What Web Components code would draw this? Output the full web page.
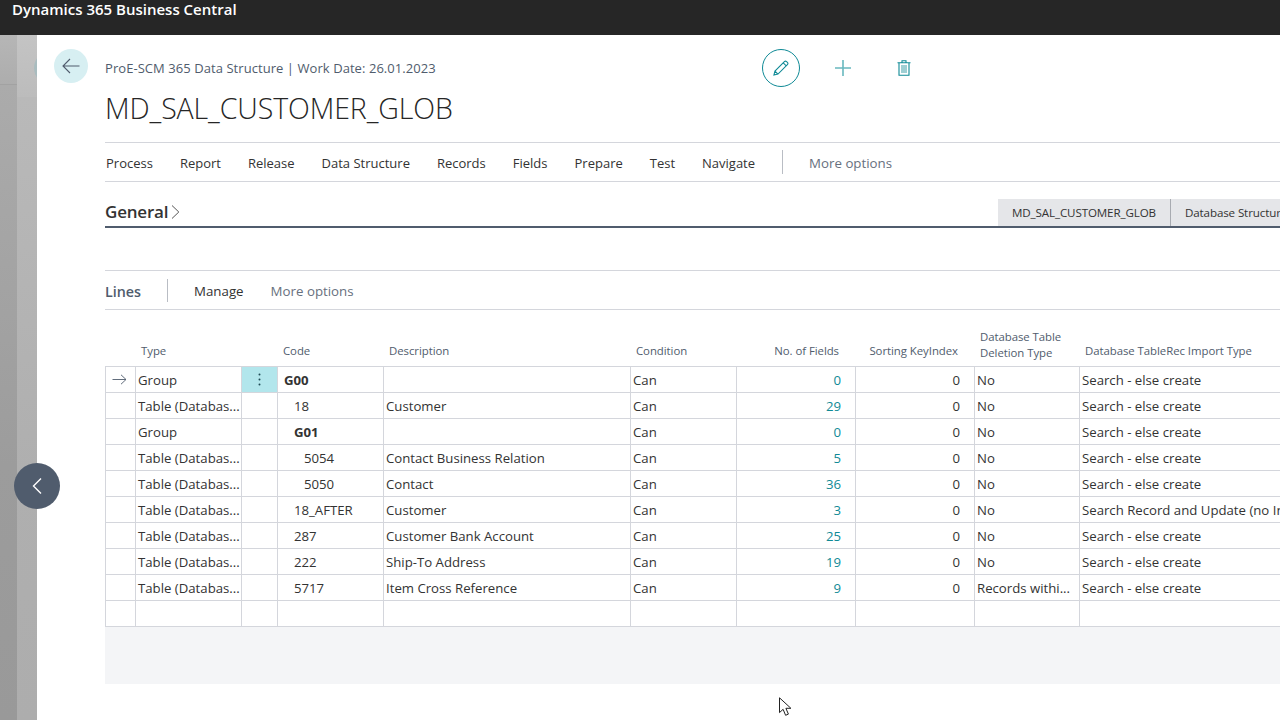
<!DOCTYPE html>
<html><head><meta charset="utf-8"><style>
html,body{margin:0;height:100%;overflow:hidden;background:#fff}
body{font-family:"Open Sans","Noto Sans",sans-serif}
</style></head><body>
<bc-shell>
  <bc-page>
    <bc-title crumb="ProE-SCM 365 Data Structure | Work Date: 26.01.2023" name="MD_SAL_CUSTOMER_GLOB"></bc-title>
    <bc-menu items="Process,Report,Release,Data Structure,Records,Fields,Prepare,Test,Navigate"></bc-menu>
    <bc-general></bc-general>
    <bc-lines></bc-lines>
  </bc-page>
</bc-shell>
<script>
const FONT='"Open Sans","Noto Sans",sans-serif';
function def(name,html,init){customElements.define(name,class extends HTMLElement{connectedCallback(){if(this.shadowRoot)return;const r=this.attachShadow({mode:'open'});r.innerHTML=typeof html==='function'?html(this):html;init&&init(r,this)}})}
def('bc-shell',`<style>
:host{display:flex;flex-direction:column;height:720px;position:relative;font-family:${FONT};overflow:hidden}
.top{height:35px;background:#262626;color:#fff;font-weight:600;font-size:15px;line-height:19px;padding:0 12px;box-sizing:border-box;flex:none}
.body{flex:1;display:flex;min-height:0}
.rail{flex:none;width:37px;display:flex;position:relative;overflow:hidden}
.a{width:17px;display:flex;flex-direction:column}
.a1{height:50px;background:linear-gradient(#b6b6b6,#adadad);border-bottom:1px solid #a2a2a2;box-sizing:border-box}
.a2{flex:1;background:linear-gradient(#ababab,#9c9c9c 60%,#999)}
.b{width:20px;display:flex;flex-direction:column}
.b1{height:62px;background:linear-gradient(#c4c4c4,#bcbcbc)}
.b2{flex:1;background:linear-gradient(#b9b9b9,#afafaf 60%,#adadad)}
.ghost{position:absolute;left:34px;top:16px;width:34px;height:34px;border-radius:50%;background:#a9bcbf}
.main{flex:1;min-width:0;background:#fff}
.back{position:absolute;left:14px;top:463px;width:46px;height:46px;border-radius:50%;background:#505c6d;display:flex;align-items:center;justify-content:center}
.cursor{position:absolute;left:779px;top:697px}
</style>
<div class="top">Dynamics 365 Business Central</div>
<div class="body"><div class="rail"><div class="a"><div class="a1"></div><div class="a2"></div></div><div class="b"><div class="b1"></div><div class="b2"></div></div><div class="ghost"></div></div><div class="main"><slot></slot></div></div>
<div class="back"><svg width="12" height="18" viewBox="0 0 12 18"><path d="M10 1.500 2.500 9l7.500 7.500" fill="none" stroke="#fff" stroke-width="1.400"/></svg></div>
<svg class="cursor" width="14" height="21" viewBox="0 0 14 21"><path d="M.5.800V15.600l3.600-3.300 2.500 6 2.800-1.200-2.500-5.800h5z" fill="#fff" stroke="#222" stroke-width="1"/></svg>`);
def('bc-page',`<style>:host{display:block;padding:0 0 0 68px;width:1243px;box-sizing:border-box;overflow:hidden}</style><slot></slot>`);
def('bc-title',h=>`<style>
:host{display:block;position:relative;height:108px;box-sizing:border-box;border-bottom:1px solid #d4d6dc}
.backbtn{position:absolute;left:-51px;top:14px;width:34px;height:34px;border-radius:50%;background:#d7eff2;display:flex;align-items:center;justify-content:center}
.crumb{font-size:13px;color:#505c6d;line-height:18px;padding-top:24px;letter-spacing:.06px}
.name{font-size:28.500px;font-weight:300;color:#262626;line-height:38px;margin-top:12px;letter-spacing:-.1px}
.acts{position:absolute;left:657px;top:14px;display:flex;align-items:center}
.edit{width:38px;height:38px;border-radius:50%;border:1.300px solid #0f8a96;box-sizing:border-box;display:flex;align-items:center;justify-content:center}
.add{margin-left:35px;display:flex}.del{margin-left:46px;display:flex}
</style>
<div class="backbtn"><svg width="18" height="16" viewBox="0 0 18 16"><path d="M8 1 1 8l7 7M1 8h16.500" fill="none" stroke="#505c6d" stroke-width="1.100"/></svg></div>
<div class="crumb">${h.getAttribute('crumb')}</div>
<div class="name">${h.getAttribute('name')}</div>
<div class="acts">
<div class="edit"><svg width="16" height="16" viewBox="0 0 18 18"><path d="M1 17l1.200-4.600L12.800 1.800a1.700 1.700 0 0 1 2.400 0l1 1a1.700 1.700 0 0 1 0 2.400L5.600 15.800zM2.200 12.400l3.400 3.400M11.500 3.100l3.400 3.400" fill="none" stroke="#0f8a96" stroke-width="1.200"/></svg></div>
<div class="add"><svg width="16" height="16" viewBox="0 0 16 16"><path d="M8 0v16M0 8h16" stroke="#68b8bf" stroke-width="1.600"/></svg></div>
<div class="del"><svg width="14" height="16" viewBox="0 0 14 16"><path d="M.5 2.700h13M5 2.500V.7h4v1.800M2 2.700V15.300h10V2.700" fill="none" stroke="#0f8a96" stroke-width="1.100"/><path d="M5 5v8M7 5v8M9 5v8" stroke="#3f9fa8" stroke-width="1"/></svg></div>
</div>`);
def('bc-menu',h=>`<style>
:host{display:flex;align-items:center;height:39px;box-sizing:border-box;border-bottom:1px solid #d4d6dc;font-size:13px;color:#333;padding:2px 0 0 1px}
span{margin-right:27px}
i{width:1px;height:24px;background:#b9bdc4;margin:-2px 26px 0 0}
.m{color:#67707e;margin:0;font-size:13.300px}
</style>${h.getAttribute('items').split(',').map(t=>`<span>${t}</span>`).join('')}<i></i><span class="m">More options</span>`);
def('bc-general',`<style>
:host{display:flex;justify-content:space-between;align-items:flex-end;height:46px;box-sizing:border-box;border-bottom:2px solid #505c6d;position:relative}
.h{font-size:17px;font-weight:600;color:#333;display:flex;align-items:center;height:30px;margin-bottom:0;letter-spacing:-.2px}
.h svg{margin-left:3px;margin-top:1px}
.tabs{display:flex;position:absolute;left:893px;top:17px;height:27px;white-space:nowrap}
.t{background:#e5e6e9;font-size:11.600px;color:#333;line-height:27px;padding:0 14px;border-right:1px solid #a8abb1;letter-spacing:-.12px}
.t2{border:0}
</style>
<div class="h">General<svg width="9" height="14" viewBox="0 0 9 14"><path d="M1 .5 7.800 7 1 13.500" fill="none" stroke="#555" stroke-width="1"/></svg></div>
<div class="tabs"><div class="t">MD_SAL_CUSTOMER_GLOB</div><div class="t t2">Database Structure Lines</div></div>`);
const ROWS=[
['Group','G00','',0,'No','Search - else create',0,1],
['Table (Databas...','18','Customer',29,'No','Search - else create',1],
['Group','G01','',0,'No','Search - else create',1,1],
['Table (Databas...','5054','Contact Business Relation',5,'No','Search - else create',2],
['Table (Databas...','5050','Contact',36,'No','Search - else create',2],
['Table (Databas...','18_AFTER','Customer',3,'No','Search Record and Update (no Insert)',1],
['Table (Databas...','287','Customer Bank Account',25,'No','Search - else create',1],
['Table (Databas...','222','Ship-To Address',19,'No','Search - else create',1],
['Table (Databas...','5717','Item Cross Reference',9,'Records withi...','Search - else create',1],
];
const COLS='30px 106px 36px 106px 247px 106px 119px 119px 105px 260px';
def('bc-lines',()=>{
 const row=(r,i)=>`<div class="r">
 <div class="c arrow">${i===0?'<svg width="15" height="11" viewBox="0 0 15 11"><path d="M9 .8 14 5.500 9 10.200M14 5.500H.5" fill="none" stroke="#505c6d" stroke-width=".9"/></svg>':''}</div>
 <div class="c">${r[0]}</div>
 <div class="c dots${i===0?' on':''}">${i===0?'<svg width="3" height="13" viewBox="0 0 3 13"><g fill="#1f4a55"><circle cx="1.500" cy="1.500" r="1"/><circle cx="1.500" cy="6.500" r="1"/><circle cx="1.500" cy="11.500" r="1"/></g></svg>':''}</div>
 <div class="c code${r[7]?' b':''}" style="padding-left:${[6,16,26][r[6]]}px">${r[1]}</div>
 <div class="c">${r[2]}</div>
 <div class="c">Can</div>
 <div class="c num link">${r[3]}</div>
 <div class="c num">0</div>
 <div class="c">${r[4]}</div>
 <div class="c last">${r[5]}</div></div>`;
 return `<style>
:host{display:block;position:relative}
.bar{margin-top:42px;height:40px;box-sizing:border-box;border-top:1px solid #d4d6dc;border-bottom:1px solid #d4d6dc;display:flex;align-items:center;font-size:13.300px;color:#333;padding-top:2px}
.bar b{font-size:14.300px;font-weight:600;color:#505c6d;width:62px}
.bar i{width:1px;height:23px;background:#b9bdc4;margin:-2px 26px 0 0}
.bar span{margin-right:27px}.bar .m{color:#67707e}
.g{display:grid;grid-template-columns:${COLS};width:1240px}
.head{height:56px;align-items:end;font-size:11.400px;color:#505c6d;letter-spacing:-.05px}
.head div{padding:0 0 7px 6px;line-height:16px}
.head .n{text-align:right;padding:0 16px 7px 0}
.head .w{padding-bottom:5px}
.r{display:grid;grid-template-columns:${COLS};height:26px;box-sizing:border-box;border-bottom:1px solid #d4d6dc;font-size:13.200px;color:#333;width:1240px}
.rows{border-top:1px solid #d4d6dc;border-left:1px solid #d4d6dc;width:1240px;box-sizing:border-box}
.c{border-right:1px solid #d4d6dc;padding:1px 2px 0;line-height:25px;white-space:nowrap;overflow:hidden;box-sizing:border-box}
.last{border-right:0}
.num{text-align:right;padding-right:14px}
.link{color:#0f8a96}
.b{font-weight:700}
.arrow{display:flex;align-items:center;justify-content:center;padding:0 2px 0 0}
.dots{display:flex;align-items:center;justify-content:center;padding:0}
.on{background:#b2e6ec}
.fill{height:57px;background:#f4f5f7}
</style>
<div class="bar"><b>Lines</b><i></i><span>Manage</span><span class="m">More options</span></div>
<div class="g head"><div></div><div>Type</div><div></div><div>Code</div><div>Description</div><div>Condition</div><div class="n">No. of Fields</div><div class="n">Sorting KeyIndex</div><div class="w">Database Table Deletion Type</div><div>Database TableRec Import Type</div></div>
<div class="rows">${ROWS.map(row).join('')}<div class="r"><div class="c"></div><div class="c"></div><div class="c"></div><div class="c"></div><div class="c"></div><div class="c"></div><div class="c"></div><div class="c"></div><div class="c"></div><div class="c last"></div></div></div>
<div class="fill"></div>`;
});
</script>
</body></html>
